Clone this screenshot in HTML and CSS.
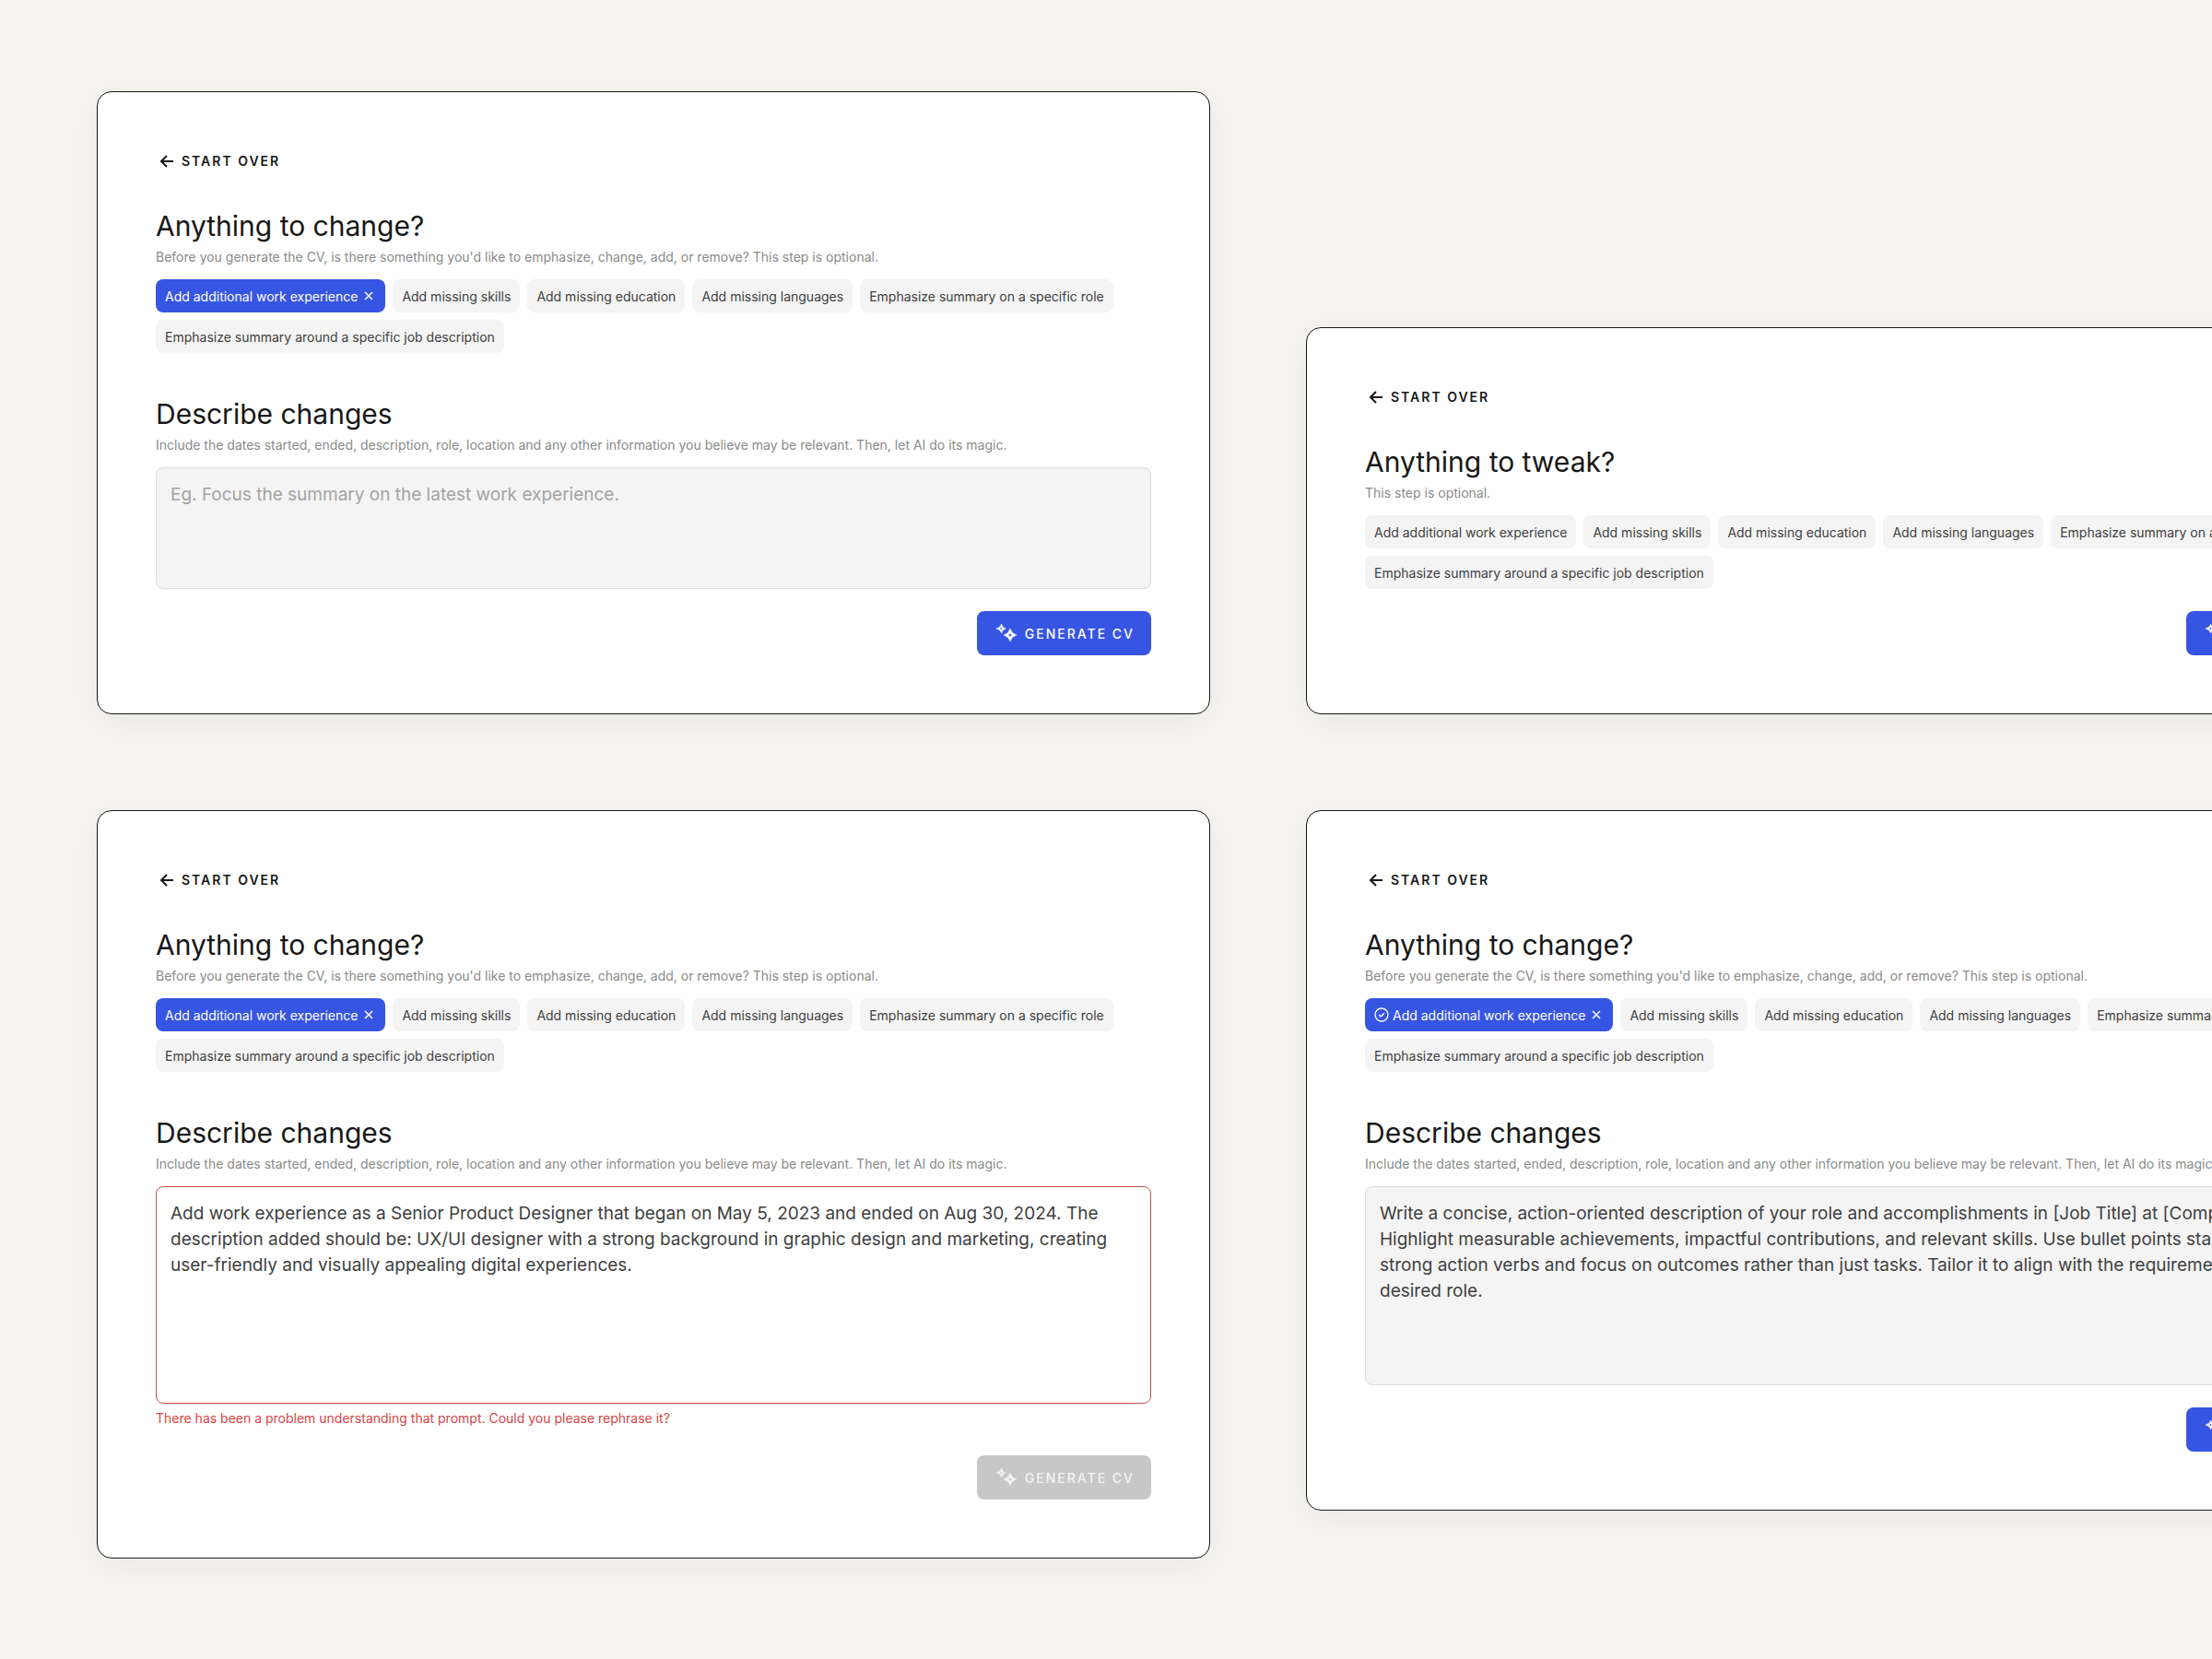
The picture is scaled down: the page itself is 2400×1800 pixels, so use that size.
FILE: index.html
```html
<!DOCTYPE html>
<html lang="en">
<head>
    <meta charset="UTF-8">
    <meta name="viewport" content="width=device-width, initial-scale=1.0">
    <title>CV Generator - Changes</title>
    <link rel="stylesheet" href="styles.css">
</head>
<body>
    <!-- Shared icons -->
    <svg class="icon-defs" aria-hidden="true">
        <symbol id="icon-arrow" viewBox="0 0 24 24">
            <path d="M19 12H6.500M12 6L6 12l6 6" fill="none" stroke="currentColor" stroke-width="2"/>
        </symbol>
        <symbol id="icon-close" viewBox="0 0 16 16">
            <path d="M4 4l8 8M12 4l-8 8" fill="none" stroke="currentColor" stroke-width="1.5"/>
        </symbol>
        <symbol id="icon-check" viewBox="0 0 16 16">
            <circle cx="8" cy="8" r="7" fill="none" stroke="currentColor" stroke-width="1.3"/>
            <path d="M5.2 8l2 2 3.8-3.8" fill="none" stroke="currentColor" stroke-width="1.3"/>
        </symbol>
        <symbol id="icon-sparkles" viewBox="0 0 24 24">
            <path d="M6.700 2Q7.400 6.300 11.500 7Q7.400 7.700 6.700 12Q5.600 7.900 1 7Q5.600 6.100 6.700 2ZM6.200 5.500L4.700 7L6.200 8.500L7.700 7Z" fill="currentColor" stroke="currentColor" stroke-width="0.6" fill-rule="evenodd"/>
            <path d="M16 7Q17.500 12.500 23 14Q17.500 15.500 16 21Q14.500 15.500 9 14Q14.500 12.500 16 7ZM16 11.500Q15.500 13.500 13.500 14Q15.500 14.500 16 16.500Q16.500 14.500 18.500 14Q16.500 13.500 16 11.500Z" fill="currentColor" stroke="currentColor" stroke-width="0.6" fill-rule="evenodd"/>
        </symbol>
    </svg>

    <main class="board">
        <form class="card">
            <a class="back" href="#"><svg class="icon"><use href="#icon-arrow"/></svg>Start over</a>
            <section class="section">
                <h2>Anything to change?</h2>
                <p class="hint">Before you generate the CV, is there something you'd like to emphasize, change, add, or remove? This step is optional.</p>
                <div class="chips">
                    <button type="button" class="chip active">Add additional work experience<svg class="icon-small"><use href="#icon-close"/></svg></button>
                    <button type="button" class="chip">Add missing skills</button>
                    <button type="button" class="chip">Add missing education</button>
                    <button type="button" class="chip">Add missing languages</button>
                    <button type="button" class="chip">Emphasize summary on a specific role</button>
                    <button type="button" class="chip">Emphasize summary around a specific job description</button>
                </div>
            </section>
            <section class="section">
                <h2><label for="changes-empty">Describe changes</label></h2>
                <p class="hint">Include the dates started, ended, description, role, location and any other information you believe may be relevant. Then, let AI do its magic.</p>
                <textarea id="changes-empty" class="prompt prompt-small" placeholder="Eg. Focus the summary on the latest work experience."></textarea>
            </section>
            <button type="button" class="generate"><svg class="icon"><use href="#icon-sparkles"/></svg>Generate CV</button>
        </form>

        <form class="card">
            <a class="back" href="#"><svg class="icon"><use href="#icon-arrow"/></svg>Start over</a>
            <section class="section">
                <h2>Anything to tweak?</h2>
                <p class="hint">This step is optional.</p>
                <div class="chips">
                    <button type="button" class="chip">Add additional work experience</button>
                    <button type="button" class="chip">Add missing skills</button>
                    <button type="button" class="chip">Add missing education</button>
                    <button type="button" class="chip">Add missing languages</button>
                    <button type="button" class="chip">Emphasize summary on a specific role</button>
                    <button type="button" class="chip">Emphasize summary around a specific job description</button>
                </div>
            </section>
            <button type="button" class="generate"><svg class="icon"><use href="#icon-sparkles"/></svg>Generate CV</button>
        </form>

        <form class="card">
            <a class="back" href="#"><svg class="icon"><use href="#icon-arrow"/></svg>Start over</a>
            <section class="section">
                <h2>Anything to change?</h2>
                <p class="hint">Before you generate the CV, is there something you'd like to emphasize, change, add, or remove? This step is optional.</p>
                <div class="chips">
                    <button type="button" class="chip active">Add additional work experience<svg class="icon-small"><use href="#icon-close"/></svg></button>
                    <button type="button" class="chip">Add missing skills</button>
                    <button type="button" class="chip">Add missing education</button>
                    <button type="button" class="chip">Add missing languages</button>
                    <button type="button" class="chip">Emphasize summary on a specific role</button>
                    <button type="button" class="chip">Emphasize summary around a specific job description</button>
                </div>
            </section>
            <section class="section">
                <h2><label for="changes-error">Describe changes</label></h2>
                <p class="hint">Include the dates started, ended, description, role, location and any other information you believe may be relevant. Then, let AI do its magic.</p>
                <textarea id="changes-error" class="prompt prompt-large prompt-error" aria-invalid="true" aria-describedby="prompt-error">Add work experience as a Senior Product Designer that began on May 5, 2023 and ended on Aug 30, 2024. The description added should be: UX/UI designer with a strong background in graphic design and marketing, creating user-friendly and visually appealing digital experiences.</textarea>
                <p class="error" id="prompt-error">There has been a problem understanding that prompt. Could you please rephrase it?</p>
            </section>
            <button type="button" class="generate" disabled><svg class="icon"><use href="#icon-sparkles"/></svg>Generate CV</button>
        </form>

        <form class="card">
            <a class="back" href="#"><svg class="icon"><use href="#icon-arrow"/></svg>Start over</a>
            <section class="section">
                <h2>Anything to change?</h2>
                <p class="hint">Before you generate the CV, is there something you'd like to emphasize, change, add, or remove? This step is optional.</p>
                <div class="chips">
                    <button type="button" class="chip active"><svg class="icon-check"><use href="#icon-check"/></svg>Add additional work experience<svg class="icon-small"><use href="#icon-close"/></svg></button>
                    <button type="button" class="chip">Add missing skills</button>
                    <button type="button" class="chip">Add missing education</button>
                    <button type="button" class="chip">Add missing languages</button>
                    <button type="button" class="chip">Emphasize summary on a specific role</button>
                    <button type="button" class="chip">Emphasize summary around a specific job description</button>
                </div>
            </section>
            <section class="section">
                <h2><label for="changes-filled">Describe changes</label></h2>
                <p class="hint">Include the dates started, ended, description, role, location and any other information you believe may be relevant. Then, let AI do its magic.</p>
                <textarea id="changes-filled" class="prompt prompt-medium">Write a concise, action-oriented description of your role and accomplishments in [Job Title] at [Company Name]. Highlight measurable achievements, impactful contributions, and relevant skills. Use bullet points starting with strong action verbs and focus on outcomes rather than just tasks. Tailor it to align with the requirements of your desired role.</textarea>
            </section>
            <button type="button" class="generate"><svg class="icon"><use href="#icon-sparkles"/></svg>Generate CV</button>
        </form>
    </main>
</body>
</html>
```
FILE: styles.css
```css
* {
    box-sizing: border-box;
}
body {
    margin: 0;
    background: #f5f4f0;
    color: #171717;
    font-family: Inter, "Liberation Sans", sans-serif;
    font-size: 14px;
    overflow-x: hidden;
}
h2, p {
    margin: 0;
}
button, textarea {
    font-family: inherit;
}
.icon-defs {
    display: none;
}
.icon {
    width: 24px;
    height: 24px;
}
.icon-small,
.icon-check {
    width: 16px;
    height: 16px;
}
.board {
    display: grid;
    grid-template-columns: repeat(2, calc(50vw + 8px));
    gap: 104px;
    padding: 99px 105px;
}
.board .card:nth-child(2) {
    align-self: end;
}
.board .card:nth-child(4) {
    align-self: start;
}
.card {
    display: flex;
    flex-direction: column;
    background: #fff;
    border: 1px solid #171717;
    border-radius: 16px;
    padding: 63px;
    box-shadow: 0 8px 40px rgba(0,0,0,0.05);
}
.back {
    display: flex;
    align-items: center;
    align-self: flex-start;
    gap: 4px;
    color: #171717;
    font-size: 14px;
    font-weight: 600;
    line-height: 24px;
    letter-spacing: 2px;
    text-transform: uppercase;
    text-decoration: none;
    margin-bottom: 40px;
}
.section + .section {
    margin-top: 48px;
}
h2 {
    font-size: 30px;
    font-weight: 400;
    line-height: 36px;
}
.hint {
    color: #8a8a8a;
    line-height: 24px;
    margin: 4px 0 12px;
}
.chips {
    display: flex;
    flex-wrap: wrap;
    gap: 8px;
}
.chip {
    display: flex;
    align-items: center;
    gap: 4px;
    height: 36px;
    padding: 0 10px;
    border: none;
    border-radius: 8px;
    background: #f4f4f4;
    color: #404040;
    font-size: 14px;
    cursor: pointer;
}
.chip.active {
    background: #3755e3;
    color: #fff;
}
.prompt {
    display: block;
    width: 100%;
    padding: 15px;
    border: 1px solid #dcdcdc;
    border-radius: 8px;
    background: #f4f4f4;
    color: #404040;
    font-size: 19px;
    line-height: 28px;
    resize: none;
    outline: none;
}
.prompt::placeholder {
    color: #a3a3a3;
    opacity: 1;
}
.prompt-small {
    height: 132px;
}
.prompt-medium {
    height: 216px;
}
.prompt-large {
    height: 236px;
}
.prompt-error {
    background: #fff;
    border-color: #c9504f;
}
.error {
    color: #d64545;
    line-height: 24px;
    margin: 4px 0;
}
.generate {
    display: flex;
    align-items: center;
    align-self: flex-end;
    gap: 8px;
    height: 48px;
    margin-top: 24px;
    padding: 0 18px 0 20px;
    border: none;
    border-radius: 8px;
    background: #3755e3;
    color: #fff;
    font-size: 14px;
    font-weight: 500;
    letter-spacing: 2px;
    text-transform: uppercase;
    cursor: pointer;
}
.generate:disabled {
    background: #c7c7c7;
    color: #f4f4f4;
    cursor: not-allowed;
}
```
